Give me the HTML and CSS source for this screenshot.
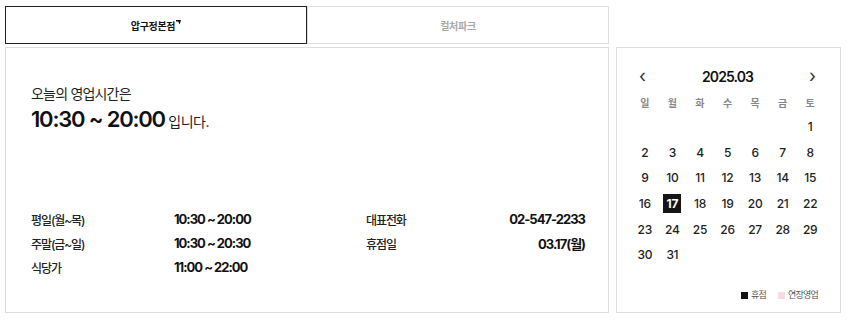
FILE: index.html
```html
<!DOCTYPE html>
<html lang="ko">
<head>
    <meta charset="UTF-8">
    <title>영업시간</title>
    <link rel="stylesheet" href="styles.css">
</head>
<body>
    <div class="wrap">
        <div class="store">
            <div class="tabs">
                <button class="tab active">압구정본점<svg class="mark" width="5" height="5" viewBox="0 0 5 5"><path d="M0 0H5L3.6 4.6 2.2 1.6 0 1.4z" fill="#111"/></svg></button>
                <button class="tab">컬처파크</button>
            </div>

            <div class="panel">
                <p class="today-label">오늘의 영업시간은</p>
                <p class="today-time"><strong>10:30 ~ 20:00</strong> 입니다.</p>

                <div class="info">
                    <span class="label">평일(월~목)</span>
                    <span class="value">10:30 ~ 20:00</span>
                    <span class="label">대표전화</span>
                    <span class="value right">02-547-2233</span>

                    <span class="label">주말(금~일)</span>
                    <span class="value">10:30 ~ 20:30</span>
                    <span class="label">휴점일</span>
                    <span class="value right">03.17(월)</span>

                    <span class="label">식당가</span>
                    <span class="value">11:00 ~ 22:00</span>
                </div>
            </div>
        </div>

        <div class="calendar">
            <div class="cal-head">
                <span class="arrow">‹</span>
                <span class="month">2025.03</span>
                <span class="arrow">›</span>
            </div>
            <div class="weekdays">
                <span>일</span><span>월</span><span>화</span><span>수</span><span>목</span><span>금</span><span>토</span>
            </div>
            <div class="days">
                <span></span><span></span><span></span><span></span><span></span><span></span><span>1</span>
                <span>2</span><span>3</span><span>4</span><span>5</span><span>6</span><span>7</span><span>8</span>
                <span>9</span><span>10</span><span>11</span><span>12</span><span>13</span><span>14</span><span>15</span>
                <span>16</span><span><em class="closed">17</em></span><span>18</span><span>19</span><span>20</span><span>21</span><span>22</span>
                <span>23</span><span>24</span><span>25</span><span>26</span><span>27</span><span>28</span><span>29</span>
                <span>30</span><span>31</span>
            </div>
            <div class="legend">
                <span class="key"><i class="dot dark"></i>휴점</span>
                <span class="key"><i class="dot pink"></i>연장영업</span>
            </div>
        </div>
    </div>
</body>
</html>
```

FILE: styles.css
```css
* {
    margin: 0;
    padding: 0;
    box-sizing: border-box;
    font-family: 'Inter', 'Noto Sans CJK KR', sans-serif;
}

body {
    background: #fff;
    color: #111;
}

.wrap {
    display: flex;
    gap: 7px;
    padding: 6px 5px;
}

.store {
    width: 604px;
}

.tabs {
    display: flex;
    margin-bottom: 3px;
}

.tab {
    flex: 1;
    height: 38px;
    background: #fff;
    border: 1px solid #ddd;
    font-size: 10px;
    font-weight: 700;
    letter-spacing: -0.3px;
    color: #aaa;
    cursor: pointer;
}

.tab.active {
    border-color: #222;
    color: #111;
}

.mark {
    vertical-align: 5px;
    margin-left: 1px;
}

.panel {
    height: 266px;
    border: 1px solid #ddd;
    padding: 36px 23px 33px 25px;
    display: flex;
    flex-direction: column;
}

.today-label {
    font-size: 14px;
    line-height: 20px;
    letter-spacing: -0.8px;
    color: #222;
}

.today-time {
    font-size: 14px;
    line-height: 30px;
    letter-spacing: -0.5px;
    color: #222;
}

.today-time strong {
    font-size: 22px;
    font-weight: 600;
    letter-spacing: -1.2px;
    color: #111;
}

.info {
    margin-top: auto;
    display: grid;
    grid-template-columns: 143px 192px 1fr auto;
    grid-auto-rows: 24px;
    align-items: center;
}

.label {
    font-size: 12px;
    font-weight: 500;
    letter-spacing: -1.1px;
    color: #222;
}

.value {
    font-size: 13px;
    font-weight: 700;
    letter-spacing: -1px;
    color: #111;
}

.right {
    text-align: right;
}

.calendar {
    width: 225px;
    height: 266px;
    margin-top: 41px;
    border: 1px solid #ddd;
    padding: 18px 16px 10px 14px;
    display: flex;
    flex-direction: column;
}

.cal-head {
    display: flex;
    justify-content: space-between;
    align-items: center;
    height: 20px;
    padding: 0 8px;
}

.arrow {
    font-size: 18px;
    color: #333;
    line-height: 20px;
}

.month {
    font-size: 14px;
    font-weight: 600;
    letter-spacing: -0.9px;
    color: #111;
}

.weekdays,
.days {
    display: grid;
    grid-template-columns: repeat(7, 1fr);
    text-align: center;
}

.weekdays {
    margin-top: 4px;
    grid-auto-rows: 24px;
    align-items: center;
    font-size: 10px;
    font-weight: 700;
    color: #888;
}

.days {
    grid-auto-rows: 25.6px;
    font-size: 12px;
    font-weight: 500;
    letter-spacing: -0.3px;
    color: #222;
}

.days span {
    display: flex;
    align-items: center;
    justify-content: center;
}

.closed {
    font-style: normal;
    display: inline-flex;
    align-items: center;
    justify-content: center;
    width: 18px;
    height: 19px;
    background: #151515;
    color: #fff;
    font-weight: 700;
}

.legend {
    margin-top: auto;
    display: flex;
    justify-content: flex-end;
    gap: 12px;
    padding-right: 6px;
    font-size: 9px;
    letter-spacing: -0.8px;
    color: #555;
    line-height: 14px;
}

.key {
    display: flex;
    align-items: center;
    gap: 3px;
}

.dot {
    width: 7px;
    height: 7px;
}

.dark {
    background: #151515;
}

.pink {
    background: #f4dbe7;
}
```
